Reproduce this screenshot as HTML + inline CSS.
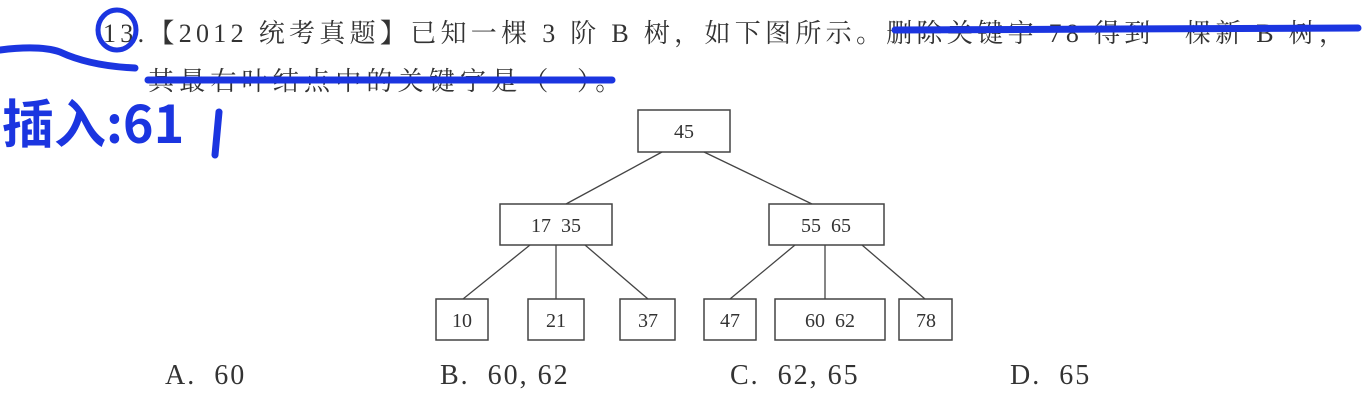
<!DOCTYPE html>
<html><head><meta charset="utf-8"><style>
body{margin:0;width:1368px;height:412px;background:#fff;position:relative;overflow:hidden;font-family:"Liberation Serif","Noto Serif CJK SC",serif;color:#333}
.t{position:absolute;font-size:26px;white-space:nowrap;line-height:1;letter-spacing:4.3px}
.o{position:absolute;font-size:28px;white-space:nowrap;line-height:1;letter-spacing:2px}
.hw{position:absolute;font-family:"Noto Sans CJK SC",sans-serif;font-weight:bold;color:#1b35e0;font-size:52px;white-space:nowrap;line-height:1}
</style></head><body>
<div class="t" style="left:103px;top:21px">13.【2012 统考真题】已知一棵 3 阶 B 树，如下图所示。删除关键字 78 得到一棵新 B 树，</div>
<div class="t" style="left:148px;top:69px;letter-spacing:5.2px">其最右叶结点中的关键字是（&nbsp;&nbsp;）。</div>
<svg style="position:absolute;left:0;top:0" width="1368" height="412">
<g fill="#fff" stroke="#444" stroke-width="1.5">
<rect x="638" y="110" width="92" height="42"/>
<rect x="500" y="204" width="112" height="41"/>
<rect x="769" y="204" width="115" height="41"/>
<rect x="436" y="299" width="52" height="41"/>
<rect x="528" y="299" width="56" height="41"/>
<rect x="620" y="299" width="55" height="41"/>
<rect x="704" y="299" width="52" height="41"/>
<rect x="775" y="299" width="110" height="41"/>
<rect x="899" y="299" width="53" height="41"/>
</g>
<g stroke="#444" stroke-width="1.3">
<line x1="662" y1="152" x2="566" y2="204"/><line x1="704" y1="152" x2="812" y2="204"/>
<line x1="530" y1="245" x2="463" y2="299"/><line x1="556" y1="245" x2="556" y2="299"/><line x1="585" y1="245" x2="648" y2="299"/>
<line x1="795" y1="245" x2="730" y2="299"/><line x1="825" y1="245" x2="825" y2="299"/><line x1="862" y1="245" x2="925" y2="299"/>
</g>
<g font-family="Liberation Serif" font-size="20" fill="#333" text-anchor="middle">
<text x="684" y="138">45</text><text x="556" y="232">17&#160;&#160;35</text><text x="826" y="232">55&#160;&#160;65</text>
<text x="462" y="327">10</text><text x="556" y="327">21</text><text x="648" y="327">37</text><text x="730" y="327">47</text><text x="830" y="327">60&#160;&#160;62</text><text x="926" y="327">78</text>
</g>
<g fill="none" stroke="#1b35e0" stroke-linecap="round" stroke-width="7">
<ellipse cx="117" cy="30" rx="19" ry="20" stroke-width="5"/>
<path d="M0 50 Q40 45 60 52 Q90 66 135 68"/>
<path d="M148 80 L612 80"/>
<path d="M895 30 L1358 28"/>
<path d="M219 112 L215 155"/>
</g>
</svg>
<div class="hw" style="left:2px;top:95px">插入:61</div>
<div class="o" style="left:165px;top:362px">A.&#160;&#160;60</div>
<div class="o" style="left:440px;top:362px">B.&#160;&#160;60, 62</div>
<div class="o" style="left:730px;top:362px">C.&#160;&#160;62, 65</div>
<div class="o" style="left:1010px;top:362px">D.&#160;&#160;65</div>
</body></html>
